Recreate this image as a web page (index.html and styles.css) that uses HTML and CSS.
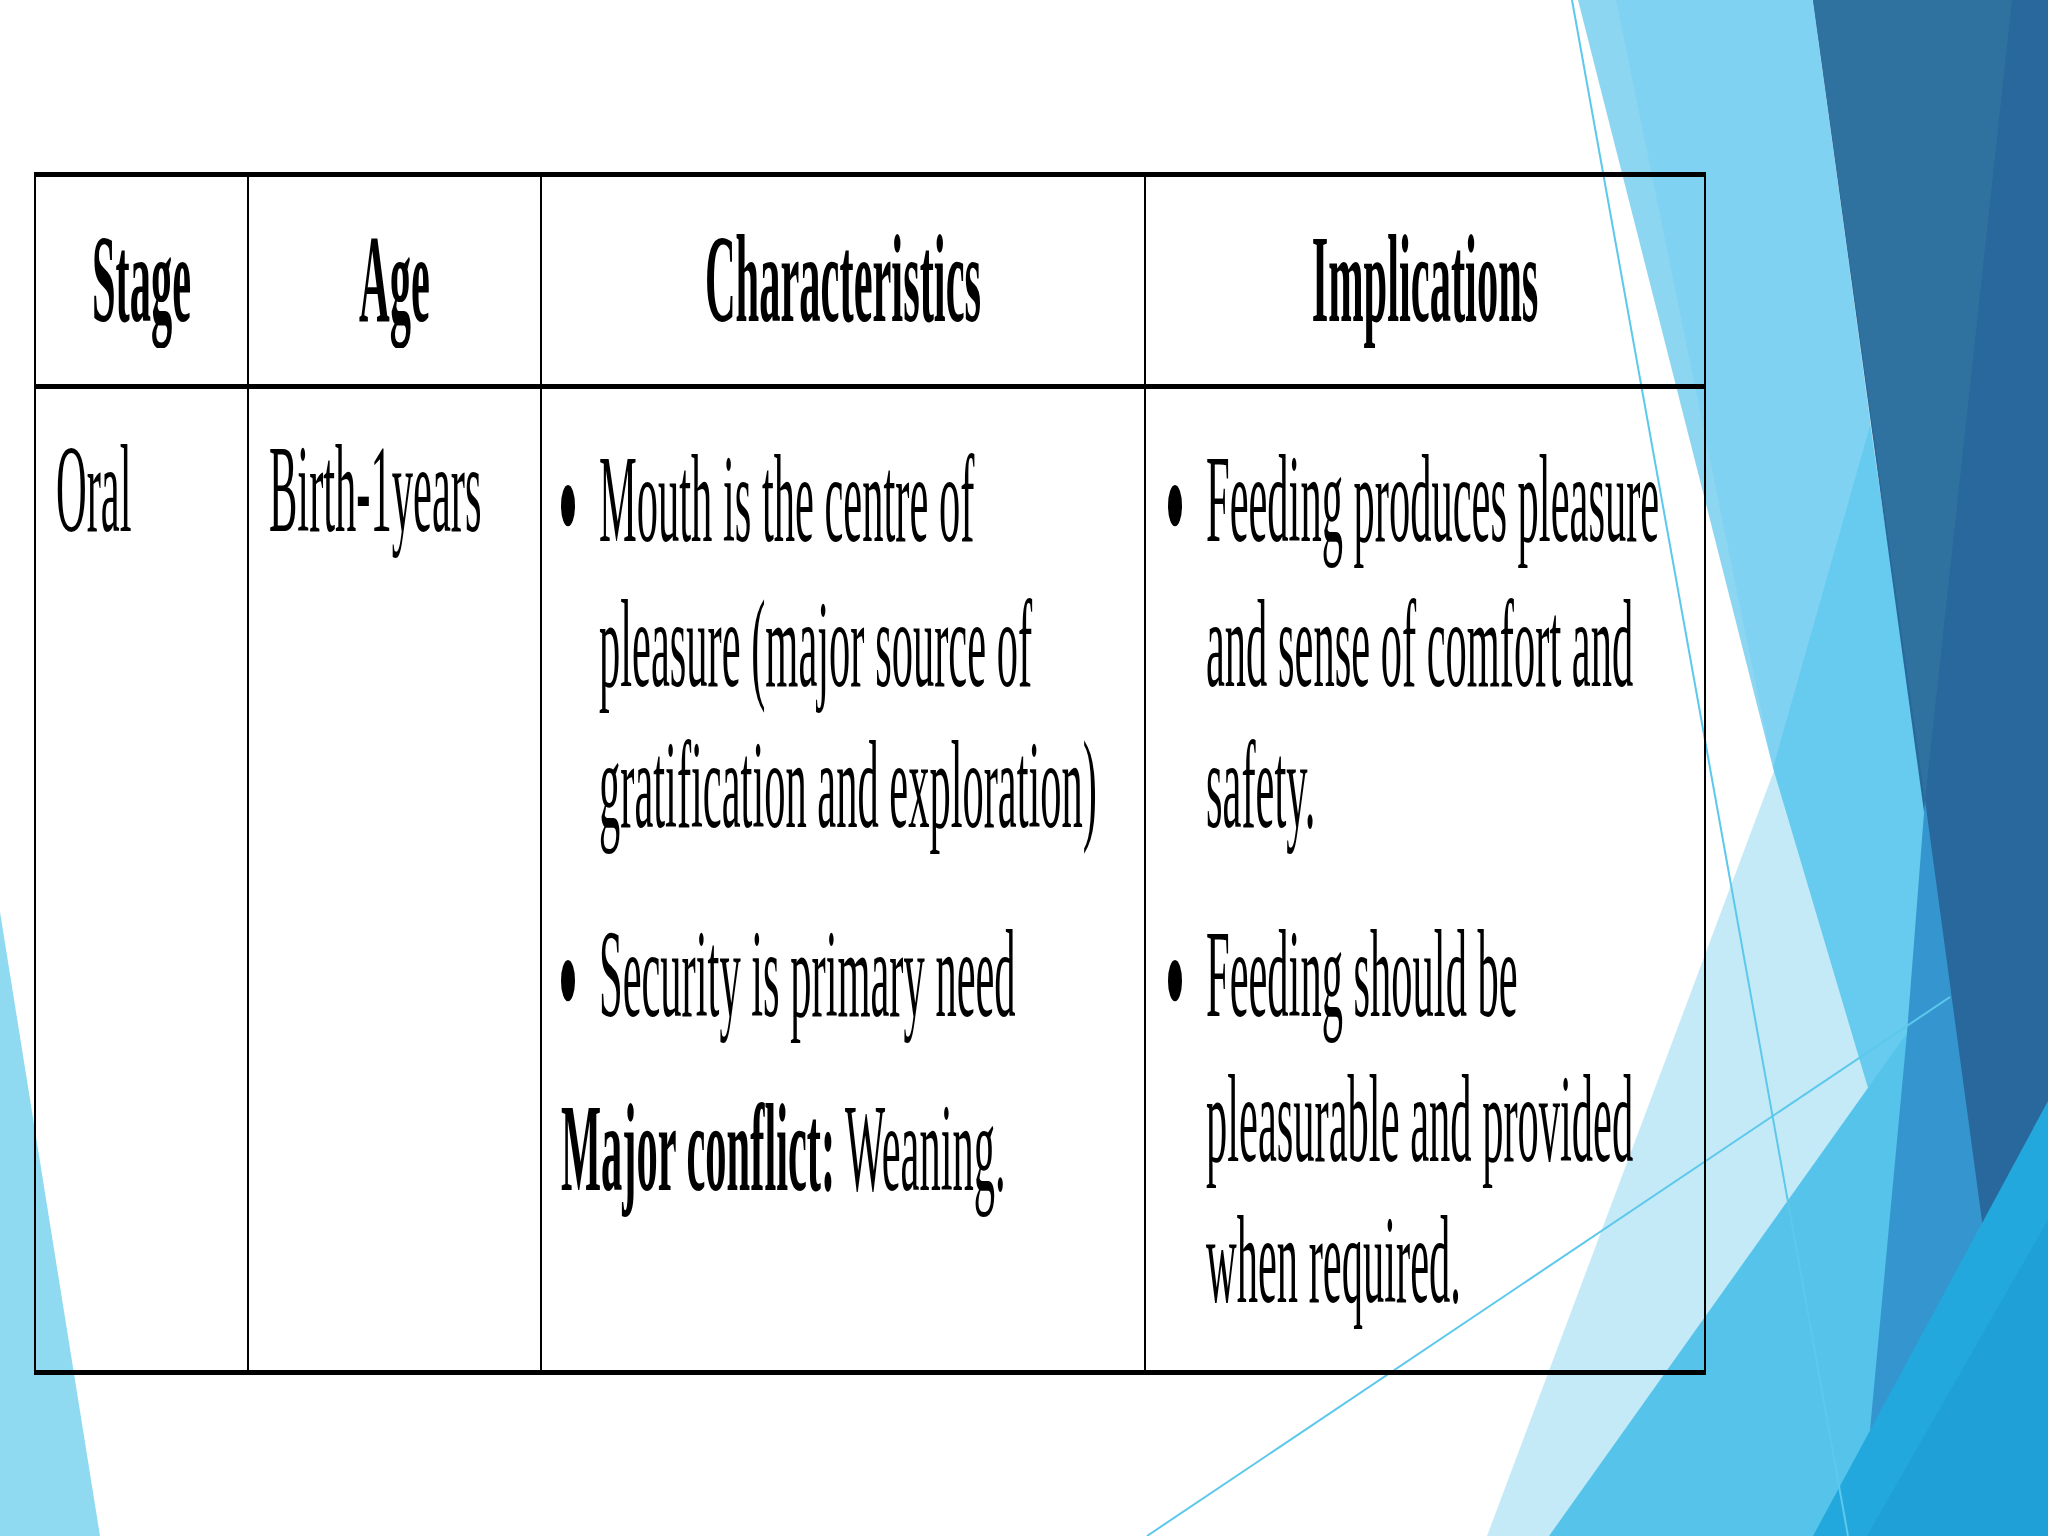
FILE: index.html
```html
<!DOCTYPE html>
<html lang="en">
<head>
<meta charset="utf-8">
<title>Oral Stage</title>
<link rel="stylesheet" href="styles.css">
</head>
<body>
<div class="slide">
  <svg class="bg" viewBox="0 0 2048 1536" preserveAspectRatio="none" aria-hidden="true">
    <polygon class="f-sliver" points="0,912 100,1536 0,1536"/>
    <polygon class="f-strip" points="1578,0 1650,0 1773,768"/>
    <polygon class="f-band" points="1616,0 1813,0 1900,640 1773,768"/>
    <polygon class="f-pale" points="1487,1536 1778,760 1800,760 1890,1095 1700,1536"/>
    <polygon class="f-kite" points="1870,426 1930,820 1945,1000 1868,1088 1773,768"/>
    <polygon class="f-mid" points="1549,1536 1907,1033 1945,1000 1900,1536"/>
    <polygon class="f-darkb" points="1813,0 2048,0 2048,1536 2023,1536"/>
    <polygon class="f-darka" points="1813,0 2012,0 1925,800"/>
    <polygon class="f-deep" points="1925,800 1990,1280 1870,1430 1907,1033"/>
    <polygon class="f-bright" points="1813,1536 2048,1101 2048,1536"/>
    <polygon class="f-bright2" points="1867,1536 2048,1220 2048,1536"/>
    <line class="ln" x1="1572" y1="0" x2="1848" y2="1536"/>
    <line class="ln" x1="1147" y1="1536" x2="1950" y2="997"/>
  </svg>

  <div class="table">
    <div class="th c1"><span class="stretch">Stage</span></div>
    <div class="th c2"><span class="stretch">Age</span></div>
    <div class="th c3"><span class="stretch">Characteristics</span></div>
    <div class="th c4"><span class="stretch">Implications</span></div>

    <div class="td c1 top-a"><div class="txt">Oral</div></div>
    <div class="td c2 top-a"><div class="txt">Birth-1years</div></div>
    <div class="td c3 top-b">
      <div class="txt">
        <p class="bullet">Mouth is the centre of<br>pleasure (major source of<br>gratification and exploration)</p>
        <p class="bullet">Security is primary need</p>
        <p class="plain"><b>Major conflict:</b> Weaning.</p>
      </div>
    </div>
    <div class="td c4 top-b">
      <div class="txt">
        <p class="bullet">Feeding produces pleasure<br>and sense of comfort and<br>safety.</p>
        <p class="bullet">Feeding should be<br>pleasurable and provided<br>when required.</p>
      </div>
    </div>
  </div>
</div>
</body>
</html>
```

FILE: styles.css
```css
html, body {
  margin: 0;
  padding: 0;
  background: #ffffff;
}

.slide {
  position: relative;
  width: 2048px;
  height: 1536px;
  overflow: hidden;
  background: #ffffff;
  box-sizing: border-box;
  padding: 172px 0 0 34px;
  font-family: "Liberation Serif", "Times New Roman", serif;
  font-size: 42.5px;
  color: #000000;
}

/* decorative facets */
.bg {
  position: absolute;
  left: 0;
  top: 0;
  width: 2048px;
  height: 1536px;
  z-index: 0;
}
.f-sliver { fill: #8fd9f1; }
.f-strip  { fill: #8dd6f1; }
.f-band   { fill: #7fd2f2; }
.f-darka  { fill: #30729f; }
.f-darkb  { fill: #28689c; }
.f-kite   { fill: #66cbee; }
.f-pale   { fill: #c4eaf8; }
.f-mid    { fill: #56c4ea; }
.f-deep   { fill: #3596cf; }
.f-bright { fill: #22a8dd; }
.f-bright2 { fill: #1fa0d6; }
.ln { stroke: #5cc8ec; stroke-width: 2; }

/* table */
.table {
  position: relative;
  z-index: 1;
  display: grid;
  box-sizing: border-box;
  width: 1672px;
  grid-template-columns: 213px 293px 604px 558px;
  grid-template-rows: 212px 981px;
  border: 2px solid #000;
  border-top-width: 5px;
  border-bottom-width: 5px;
}

.th, .td {
  box-sizing: border-box;
  min-width: 0;
}
.c1, .c2, .c3 {
  border-right: 2px solid #000;
}

.th {
  border-bottom: 5px solid #000;
  display: flex;
  align-items: center;
  justify-content: center;
}

.stretch {
  display: block;
  font-weight: bold;
  line-height: 48.64px;
  white-space: nowrap;
  transform: scaleY(2.95);
  transform-origin: 50% 50%;
}

.txt {
  line-height: 48.64px;
  transform: scaleY(2.95);
  transform-origin: 0 0;
  white-space: nowrap;
}

.top-a {
  padding: 30px 0 0 20px;
}
.top-b.c3 {
  padding: 40px 8px 0 19px;
}
.top-b.c4 {
  padding: 40px 8px 0 22px;
}

.txt p {
  margin: 0;
}
.txt .bullet {
  padding-left: 38px;
  text-indent: -38px;
}
.txt .bullet::before {
  content: "";
  display: inline-block;
  width: 14px;
  height: 14px;
  border-radius: 50%;
  background: #000;
  margin-right: 24px;
  vertical-align: 5px;
  text-indent: 0;
}
.txt .bullet + .bullet {
  margin-top: 15.1px;
}
.txt .plain {
  margin-top: 10.7px;
}
.plain b {
  font-weight: bold;
}
```
